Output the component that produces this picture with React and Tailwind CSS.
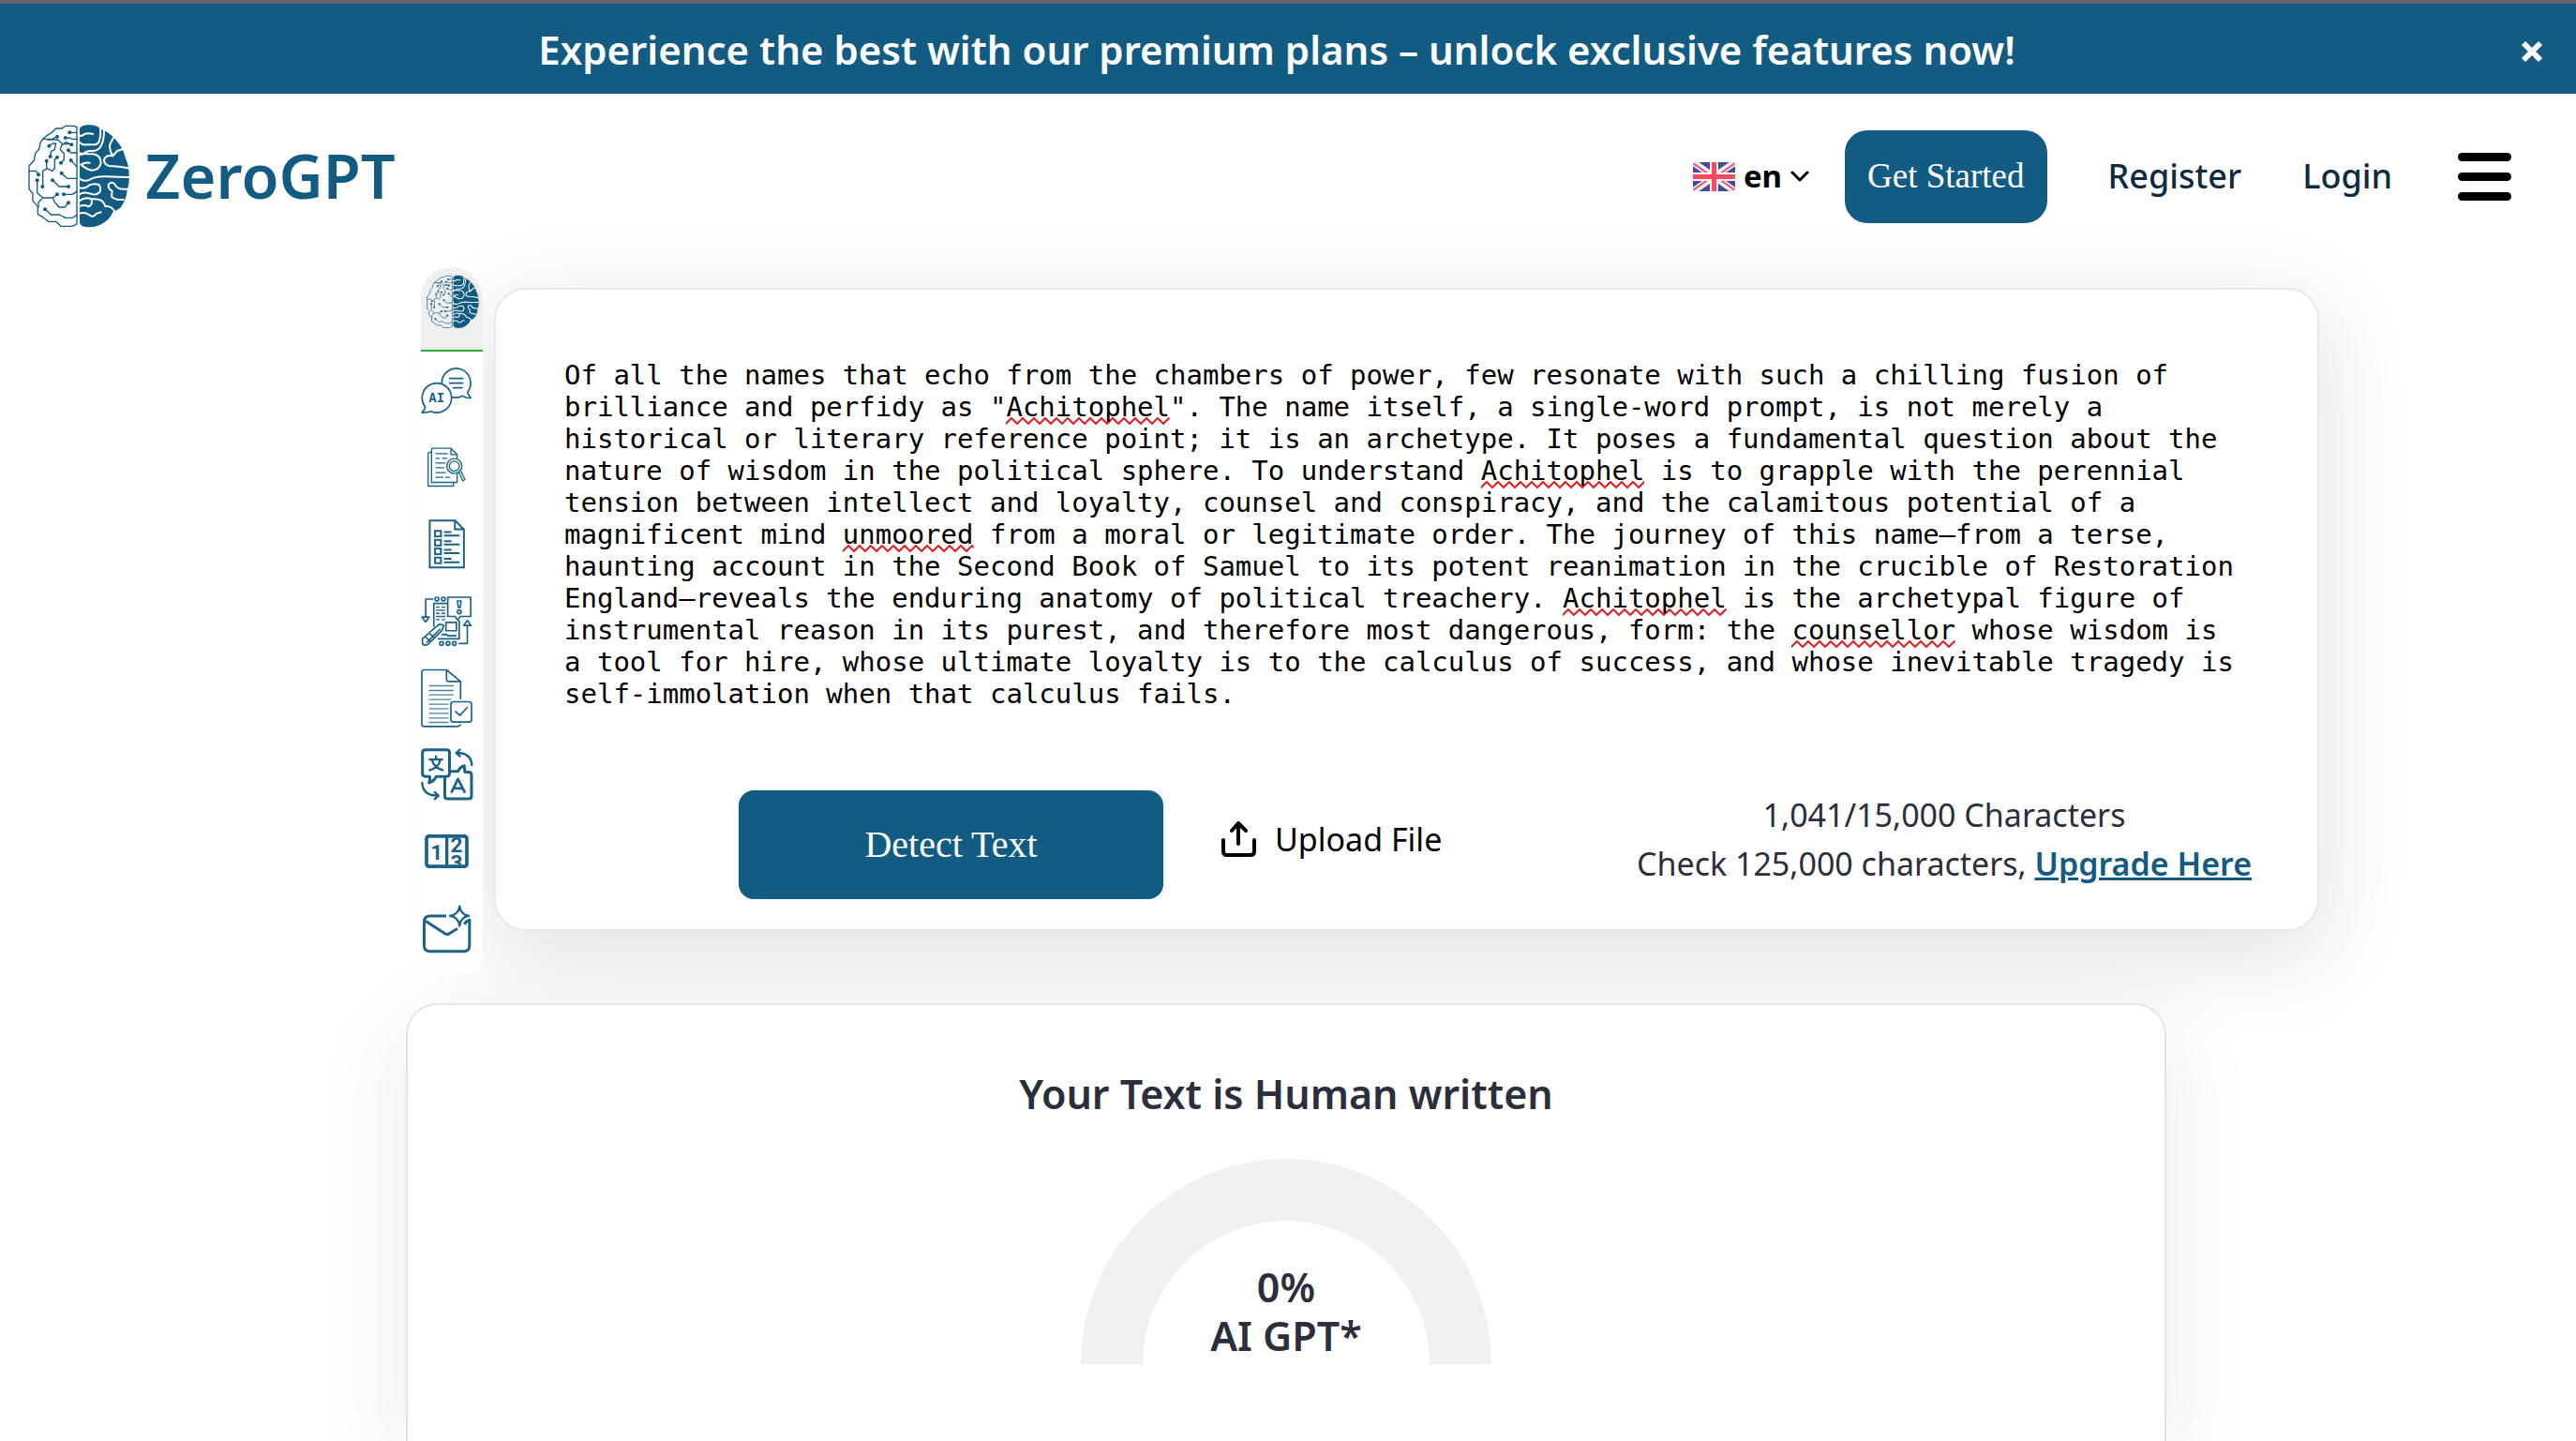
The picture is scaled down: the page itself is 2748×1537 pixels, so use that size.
import React, { useState } from "react";

const SAMPLE_TEXT =
    'Of all the names that echo from the chambers of power, few resonate with such a chilling fusion of brilliance and perfidy as "Achitophel". The name itself, a single-word prompt, is not merely a historical or literary reference point; it is an archetype. It poses a fundamental question about the nature of wisdom in the political sphere. To understand Achitophel is to grapple with the perennial tension between intellect and loyalty, counsel and conspiracy, and the calamitous potential of a magnificent mind unmoored from a moral or legitimate order. The journey of this name—from a terse, haunting account in the Second Book of Samuel to its potent reanimation in the crucible of Restoration England—reveals the enduring anatomy of political treachery. Achitophel is the archetypal figure of instrumental reason in its purest, and therefore most dangerous, form: the counsellor whose wisdom is a tool for hire, whose ultimate loyalty is to the calculus of success, and whose inevitable tragedy is self-immolation when that calculus fails.';

const MISSPELLED = ["Achitophel", "unmoored", "counsellor"];

const Brain = ({ className }) => (
    <svg viewBox="18 20 326 330" className={className} fill="none" aria-hidden="true">
        <g stroke="#125b82" strokeWidth="4" strokeLinejoin="round" strokeLinecap="round">
            <path d="M175 28 L166 24 H138 L128 32 H108 L94 46 L80 54 L66 66 L58 78 L54 98 L42 112 L38 134 L22 152 V226 L34 240 V264 L50 282 V306 L66 316 L84 330 H108 L124 345 H160 L175 338 Z" />
            <path d="M152 45 H175 M138 62 H152 L160 66 H175 M112 58 L96 66 H66" />
            <path d="M80 68 H114 L130 82 H158 M86 88 L98 80 H108 L104 100 L92 106 L90 122" />
            <path d="M158 84 L140 76 L126 86 L122 100 L134 112 V132 L124 142 M148 102 L156 110 H175" />
            <path d="M112 124 L104 132 V160 L96 168 L80 160 L66 168 V216 M78 138 V158" />
            <path d="M22 168 H44 L52 178 M156 134 L174 154 M126 176 L144 192 H175" />
            <path d="M98 198 L118 218 H148 M48 200 V238 L66 254 H98 L112 243 M66 254 L52 268 V284" />
            <path d="M134 243 H160 L175 234 M98 254 L104 268 L118 284 H136 L148 270" />
            <path d="M74 291 L92 308 H120 L138 318 H162 L175 308" />
        </g>
        <g fill="#125b82">
            {[
                [152, 45], [138, 62], [112, 58], [86, 88], [158, 84], [148, 102], [90, 122], [112, 124], [78, 136],
                [124, 142], [156, 134], [52, 180], [126, 175], [97, 198], [48, 198], [65, 218], [148, 218], [112, 243],
                [133, 243], [148, 270], [73, 291],
            ].map(([x, y]) => (
                <circle key={`${x}-${y}`} cx={x} cy={y} r="6" />
            ))}
        </g>
        <path
            d="M184 32 Q192 20 212 21 Q240 20 250 34 L262 38 Q290 54 304 74 Q324 96 330 126 Q342 150 342 182 Q344 208 336 228 Q334 262 314 286 Q302 294 290 300 Q280 326 250 340 Q228 350 204 347 Q188 346 184 334 Z"
            fill="#125b82"
        />
        <g stroke="#fff" strokeWidth="6" strokeLinecap="round" strokeLinejoin="round">
            <path d="M182 56 Q194 56 200 50 Q212 46 226 50 M182 76 Q192 86 206 84 H232 Q246 82 248 66 Q252 54 250 30" />
            <path d="M262 40 Q262 66 254 84 Q246 104 224 104 Q206 102 198 112 H182" />
            <path d="M292 62 L282 80 Q276 100 290 120 M290 120 L304 104 L322 98 M290 120 Q268 116 262 132 Q262 148 278 152 Q306 152 344 160" />
            <path d="M182 118 Q196 110 212 114 H228 Q252 118 252 144 Q246 166 222 166 Q206 162 190 150 M188 148 Q200 140 216 142" />
            <path d="M182 192 Q200 204 216 196 Q236 184 270 186 Q306 188 344 188" />
            <path d="M182 222 Q204 226 214 214 Q228 206 246 212 M182 244 Q196 234 216 240 Q236 248 248 236 Q254 220 244 212" />
            <path d="M336 226 H322 Q304 226 296 210 Q286 200 276 212 Q274 226 288 232 L286 250 Q300 262 324 260" />
            <path d="M182 264 Q204 250 222 258 Q240 256 252 262 Q262 268 266 282 Q284 278 296 298" />
            <path d="M182 282 Q198 274 212 282 Q226 276 222 262 M182 304 Q200 298 214 308 Q226 320 238 304 L252 300" />
        </g>
    </svg>
);

const Flag = () => (
    <svg viewBox="0 0 45 31" className="h-[31px] w-[45px]" aria-hidden="true">
        <clipPath id="flag-clip">
            <rect width="45" height="31" rx="4" />
        </clipPath>
        <g clipPath="url(#flag-clip)">
            <rect width="45" height="31" fill="#474a98" />
            <path d="M0 0 L45 31 M45 0 L0 31" stroke="#f5f5fa" strokeWidth="7" />
            <path d="M0 1 L20 15 M45 1 L25 15 M0 30 L20 16 M45 30 L25 16" stroke="#ff4b5c" strokeWidth="2" />
            <path d="M22.5 0 V31 M0 15.5 H45" stroke="#f5f5fa" strokeWidth="9" />
            <path d="M22.5 0 V31 M0 15.5 H45" stroke="#ff4b5c" strokeWidth="5" />
        </g>
    </svg>
);

const ChatIcon = () => (
    <svg viewBox="58 360 165 153" className="h-[51px] w-[55px]" fill="none" stroke="#1a6288" strokeWidth="5" strokeLinejoin="round">
        <path d="M125 414 A46 47 0 1 1 207 442 Q210 453 218 460 Q202 462 192 454 Q176 462 157 458" />
        <path d="M72 489 A47 47 0 1 1 90 503 Q78 508 61 507 Q70 500 72 489 Z" />
        <path d="M150 398 H192 M150 413 H192 M162 428 H190" strokeLinecap="round" />
        <text x="108" y="474" textAnchor="middle" fontFamily="DejaVu Sans Mono, monospace" fontSize="42" fontWeight="700" fill="#1a6288" stroke="none">
            AI
        </text>
    </svg>
);

const SearchDocIcon = () => (
    <svg viewBox="58 610 165 140" className="h-[47px] w-[55px]" fill="none" stroke="#1a6288" strokeWidth="4" strokeLinejoin="round">
        <path d="M92 630 L81 634 V740 H162 V728" />
        <path d="M92 619 H154 L174 639 V652 M174 699 V728 H92 V619 M154 619 V639 H174" />
        <path d="M105 636 H144 M105 651 H118 M126 651 H142 M105 666 H136 M105 681 H132 M105 697 H138 M105 712 H130 M136 712 H152" />
        <circle cx="165" cy="676" r="24" />
        <circle cx="165" cy="676" r="16" />
        <path d="M180 696 L192 723 L199 719 L186 692" />
    </svg>
);

const ListIcon = () => (
    <svg viewBox="56 844 165 160" className="h-[53px] w-[55px]" fill="none" stroke="#1a6288" strokeWidth="6">
        <path d="M84 848 H166 L194 876 V999 H84 Z M165 848 V876 H194" />
        {[881, 910, 938, 967].map((y) => (
            <g key={y}>
                <rect x="101" y={y} width="19" height="18" />
                <path d={`M130 ${y + 4} H154 M130 ${y + 15} H180`} />
            </g>
        ))}
    </svg>
);

const WorkflowIcon = () => (
    <svg viewBox="58 124 165 166" className="h-[55px] w-[55px]" fill="none" stroke="#1a6288" strokeWidth="5" strokeLinejoin="round">
        <path d="M98 136 H73 V194 M61 194 H84 L73 210 Z" />
        <circle cx="109" cy="136" r="6" />
        <circle cx="130" cy="136" r="6" />
        <path d="M144 130 H218 V192 H184 L176 204 L168 192 H144 Z" />
        <path d="M144 150 H99 V226 M181 204 V264 H112" />
        <path d="M106 162 H118 M124 162 H136 M106 172 H136 M106 182 H118 M124 182 H136 M106 192 H136 M106 202 H118 M124 202 H136" strokeWidth="4" />
        <path d="M175 142 H187 L184 163 H178 Z" />
        <circle cx="181" cy="177" r="6" />
        <rect x="138" y="211" width="34" height="27" />
        <path d="M62 264 L116 217 L131 220 L126 236 L80 282 Q68 288 63 280 Z M72 258 L90 274 M84 246 L102 262 M76 276 L120 232" />
        <path d="M124 254 Q130 244 134 252 Q140 246 144 254 H172" />
        <path d="M179 279 H207 V222 M195 221 H219 L207 205 Z" />
        <circle cx="124" cy="279" r="6" />
        <circle cx="145" cy="279" r="6" />
        <circle cx="165" cy="279" r="6" />
    </svg>
);

const CheckDocIcon = () => (
    <svg viewBox="57 366 165 188" className="h-[63px] w-[55px]" fill="none" stroke="#1a6288" strokeWidth="5" strokeLinejoin="round" strokeLinecap="round">
        <path d="M184 462 V407 L139 370 H68 Q60 370 60 378 V543 Q60 551 68 551 H172 Q180 551 184 546 M139 370 V400 Q139 407 146 407 H184" />
        <path d="M84 421 H160 M84 436 H160 M84 450 H160 M84 465 H152 M84 480 H144 M84 494 H144 M84 509 H144 M84 524 H144 M84 538 H144" strokeWidth="4" stroke="#4d84a2" />
        <rect x="153" y="472" width="66" height="65" rx="8" />
        <path d="M168 503 L182 516 L205 490" />
    </svg>
);

const TranslateIcon = () => (
    <svg viewBox="56 62 167 167" className="h-[56px] w-[56px]" fill="none" stroke="#1a6288" strokeWidth="9" strokeLinejoin="round" strokeLinecap="round">
        <path d="M70 67 H138 Q147 67 147 76 V142 Q147 152 138 152 H105 Q98 168 82 172 Q86 162 84 152 H70 Q61 152 61 142 V76 Q61 67 70 67 Z" />
        <path d="M132 158 V214 Q132 223 141 223 H208 Q217 223 217 214 V148 Q217 138 208 138 H196 L194 118 Q180 122 174 136 H154" />
        <path d="M172 77 Q216 78 218 116 M180 67 L168 77 L180 88" strokeWidth="7" />
        <path d="M60 172 Q62 212 106 213 M100 202 L112 213 L100 224" strokeWidth="7" />
        <path d="M84 98 H124 M104 88 V98 M91 99 Q98 124 125 132 M118 99 Q112 124 84 132" strokeWidth="7" />
        <path d="M154 201 L174 160 L195 201 M162 190 H187" strokeWidth="8" />
    </svg>
);

const CounterIcon = () => (
    <svg viewBox="57 333 165 113" className="h-[38px] w-[55px]">
        <clipPath id="counter-clip">
            <rect x="146" y="346" width="50" height="86" />
        </clipPath>
        <rect x="75" y="341" width="129" height="97" rx="8" fill="#fff" stroke="#1a6288" strokeWidth="11" />
        <path d="M140 341 V438" stroke="#1a6288" strokeWidth="10" />
        <g fontFamily="Roboto, sans-serif" fontWeight="700" fill="#1a6288" textAnchor="middle">
            <text x="107" y="416" fontSize="68">1</text>
            <g clipPath="url(#counter-clip)">
                <text x="171" y="392" fontSize="68">2</text>
                <text x="171" y="450" fontSize="68">3</text>
            </g>
        </g>
    </svg>
);

const MailIcon = () => (
    <svg viewBox="57 554 165 160" className="h-[53px] w-[55px]" fill="none" stroke="#1a6288" strokeWidth="9" strokeLinejoin="round">
        <path d="M138 593 H86 Q67 593 67 612 V688 Q67 707 86 707 H194 Q213 707 213 688 V606 Q202 610 196 620" />
        <path d="M72 610 L134 650 Q140 654 148 650 L174 634" />
        <path d="M181 562 Q184 589 211 593 Q184 597 181 625 Q178 597 150 593 Q178 589 181 562 Z" strokeWidth="7" />
    </svg>
);

const TOOLS = [
    { label: "AI chat", Icon: ChatIcon },
    { label: "Plagiarism checker", Icon: SearchDocIcon },
    { label: "Summarizer", Icon: ListIcon },
    { label: "Paraphraser", Icon: WorkflowIcon },
    { label: "Grammar checker", Icon: CheckDocIcon },
    { label: "Translator", Icon: TranslateIcon },
    { label: "Word counter", Icon: CounterIcon },
    { label: "Email helper", Icon: MailIcon },
];

const Banner = ({ onClose }) => (
    <div className="flex h-[100px] items-center border-t-4 border-[#656669] bg-[#125b82] px-[35px] pt-px text-white">
        <p className="flex-1 text-center text-[42px] font-semibold">
            Experience the best with our premium plans – unlock exclusive features now!
        </p>
        <button type="button" aria-label="Close" onClick={onClose} className="cursor-pointer pt-1">
            <svg viewBox="0 0 24 24" className="size-6" stroke="#fff" strokeWidth="6" aria-hidden="true">
                <path d="M3 3 L21 21 M21 3 L3 21" />
            </svg>
        </button>
    </div>
);

const Header = () => (
    <header className="flex h-[176px] items-center pl-[29px] pr-[69px]">
        <a href="#" className="flex items-center gap-4 text-[#125b82]">
            <Brain className="h-[110px] w-[110px]" />
            <span className="text-[65px] font-semibold">ZeroGPT</span>
        </a>
        <nav className="ml-auto flex items-center text-[36px] font-medium text-[#0d2c40]">
            <button type="button" className="flex items-center gap-[9px] text-[33px] font-bold text-black">
                <Flag />
                en
                <svg viewBox="0 0 20 12" className="h-3 w-5" fill="none" stroke="#000" strokeWidth="3" strokeLinecap="round" strokeLinejoin="round" aria-hidden="true">
                    <path d="M2 2 L10 10 L18 2" />
                </svg>
            </button>
            <a href="#" className="ml-[38px] flex h-[99px] items-center rounded-3xl bg-[#125b82] px-6 font-['Liberation_Serif',serif] text-[37px] font-normal text-white">
                Get Started
            </a>
            <a href="#" className="ml-[65px]">Register</a>
            <a href="#" className="ml-[65px]">Login</a>
            <button type="button" aria-label="Menu" className="ml-[70px] flex w-[57px] flex-col gap-3">
                <span className="h-[9px] w-full rounded-full bg-black" />
                <span className="h-[9px] w-full rounded-full bg-black" />
                <span className="h-[9px] w-full rounded-full bg-black" />
            </button>
        </nav>
    </header>
);

const ToolBar = () => (
    <div className="relative flex w-[66px] shrink-0 flex-col rounded-t-[33px] rounded-b-2xl bg-white pb-2">
        <button type="button" aria-label="AI detector" className="flex h-[90px] justify-center rounded-t-[33px] border-b-2 border-[#2cb034] bg-[#efefef] pt-1.5 pl-0.5">
            <Brain className="h-[62px] w-[56px]" />
        </button>
        {TOOLS.map(({ label, Icon }) => (
            <button key={label} type="button" aria-label={label} className="flex h-[82px] items-center">
                <Icon />
            </button>
        ))}
    </div>
);

// Blank boxes as wide as each word, so the underlines wrap together with the text box
const SpellMarks = ({ text }) => (
    <div aria-hidden="true" className="col-start-1 row-start-1">
        {text.split(/([A-Za-z]+)|(\s+)/).filter(Boolean).map((part, i) =>
            /\s/.test(part) ? (
                " "
            ) : (
                <span key={i} className="inline-block h-[34px] pt-7 align-top" style={{ width: `${part.length}ch` }}>
                    {MISSPELLED.includes(part) && (
                        <svg className="block h-2 w-full">
                            <pattern id={`squiggle-${i}`} width="12" height="8" patternUnits="userSpaceOnUse">
                                <path d="M-1 8 L6 1 L13 8" fill="none" stroke="#e01b24" strokeWidth="2" />
                            </pattern>
                            <rect width="100%" height="8" fill={`url(#squiggle-${i})`} />
                        </svg>
                    )}
                </span>
            )
        )}
    </div>
);

const Editor = () => {
    const [text, setText] = useState(SAMPLE_TEXT);

    return (
        <div className="mt-[22px] min-w-0 flex-1 rounded-[34px] border-2 border-[#e6e8ef] bg-white pt-[74px] pb-8 shadow-[0_24px_96px_rgba(45,55,72,0.16)]">
            <div className="grid pl-[73px] pr-[77px] font-['DejaVu_Sans_Mono',monospace] text-[29px] leading-[34px]">
                <SpellMarks text={text} />
                <textarea
                    aria-label="Text to check"
                    rows={11}
                    spellCheck={false}
                    value={text}
                    onChange={(e) => setText(e.target.value)}
                    className="col-start-1 row-start-1 resize-none overflow-hidden bg-transparent text-black outline-none"
                />
            </div>
            <div className="mt-[86px] flex items-start pl-[259px] pr-[70px] text-[34px]">
                <button type="button" className="h-[116px] w-[453px] rounded-2xl bg-[#125b82] font-['Liberation_Serif',serif] text-[40px] text-white">
                    Detect Text
                </button>
                <button type="button" className="ml-[62px] flex h-[104px] items-center gap-5 text-black">
                    <svg viewBox="0 0 37 38" className="h-[38px] w-[37px]" fill="none" stroke="#000" strokeWidth="4" strokeLinecap="round" strokeLinejoin="round" aria-hidden="true">
                        <path d="M2 20 V32 Q2 36 6 36 H31 Q35 36 35 32 V20 M18 24 V3 M11 10 L18 2 L26 10" />
                    </svg>
                    Upload File
                </button>
                <div className="ml-auto text-center leading-[52px] text-[#2b2e3b]">
                    <p>{text.length.toLocaleString("en-US")}/15,000 Characters</p>
                    <p>
                        Check 125,000 characters,{" "}
                        <a href="#" className="font-semibold text-[#125b82] underline decoration-[3px]">
                            Upgrade Here
                        </a>
                    </p>
                </div>
            </div>
        </div>
    );
};

const Result = () => (
    <section className="relative ml-[15.75%] mr-[15.9%] mt-[31px] flex-1 rounded-t-[34px] border-2 border-b-0 border-[#e4e6ea] bg-white pt-[65px] text-center text-[#2b2e3b] shadow-[0_24px_96px_rgba(45,55,72,0.1)]">
        <h1 className="text-[43px] font-semibold leading-[60px]">Your Text is Human written</h1>
        <div className="mx-auto mt-[39px] grid w-[438px]">
            <svg viewBox="0 0 438 219" className="col-start-1 row-start-1 w-full" aria-hidden="true">
                <path d="M0 219 A219 219 0 0 1 438 219 H372 A153 153 0 0 0 66 219 Z" fill="#f1f1f1" />
            </svg>
            <p className="col-start-1 row-start-1 self-end pb-1 text-[43px] font-semibold leading-[52px]">
                0%
                <br />
                AI GPT*
            </p>
        </div>
    </section>
);

const App = () => {
    const [showBanner, setShowBanner] = useState(true);

    return (
        <div className="flex min-h-screen flex-col overflow-x-hidden bg-white font-['Noto_Sans',sans-serif]">
            {showBanner && <Banner onClose={() => setShowBanner(false)} />}
            <Header />
            <main className="flex flex-1 flex-col pt-[9px]">
                <div className="ml-[16.34%] mr-[9.97%] flex items-start gap-3">
                    <ToolBar />
                    <Editor />
                </div>
                <Result />
            </main>
        </div>
    );
};

export default App;
